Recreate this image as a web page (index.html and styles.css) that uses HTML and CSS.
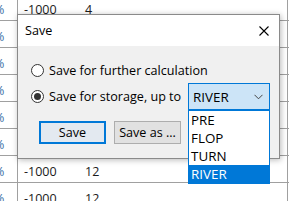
FILE: index.html
```html
<!DOCTYPE html>
<html lang="en">
<head>
  <meta charset="UTF-8" />
  <title>Save</title>
  <link rel="stylesheet" href="styles.css">
</head>
<body>

  <!-- grid behind the dialog -->
  <div class="grid">
    <div class="row"><div class="cell first"><span>%</span></div><div class="cell val">-1000</div><div class="cell num">4</div><div class="cell rest"></div></div>
    <div class="row"><div class="cell first"><span>%</span></div><div class="cell val"></div><div class="cell num"></div><div class="cell rest"></div></div>
    <div class="row"><div class="cell first"><span>%</span></div><div class="cell val"></div><div class="cell num"></div><div class="cell rest"></div></div>
    <div class="row"><div class="cell first"><span>%</span></div><div class="cell val"></div><div class="cell num"></div><div class="cell rest"></div></div>
    <div class="row"><div class="cell first"><span>%</span></div><div class="cell val"></div><div class="cell num"></div><div class="cell rest"></div></div>
    <div class="row"><div class="cell first"><span>%</span></div><div class="cell val"></div><div class="cell num"></div><div class="cell rest"></div></div>
    <div class="row"><div class="cell first"><span>%</span></div><div class="cell val">-1000</div><div class="cell num">12</div><div class="cell rest"></div></div>
    <div class="row"><div class="cell first"><span>%</span></div><div class="cell val">-1000</div><div class="cell num">12</div><div class="cell rest"></div></div>
  </div>

  <!-- Save dialog -->
  <div class="dialog">
    <div class="titlebar">
      <span class="title">Save</span>
      <svg class="close" width="10" height="10" viewBox="0 0 10 10">
        <path d="M0.5 0.5 L9.5 9.5 M9.5 0.5 L0.5 9.5" stroke="#000" stroke-width="1.1" fill="none"/>
      </svg>
    </div>
    <div class="content">
      <div class="option first-opt">
        <span class="radio"></span>
        <span>Save for further calculation</span>
      </div>
      <div class="option">
        <span class="radio checked"></span>
        <span>Save for storage, up to</span>
        <div class="select">
          <span>RIVER</span>
          <svg width="9" height="6" viewBox="0 0 9 6">
            <path d="M0.5 0.8 L4.5 4.8 L8.5 0.8" stroke="#444" stroke-width="1" fill="none"/>
          </svg>
          <ul class="dropdown">
            <li>PRE</li>
            <li>FLOP</li>
            <li>TURN</li>
            <li class="selected">RIVER</li>
          </ul>
        </div>
      </div>
      <div class="buttons">
        <button class="btn default">Save</button>
        <button class="btn">Save as ...</button>
      </div>
    </div>
  </div>

</body>
</html>
```

FILE: styles.css
```css
body {
  margin: 0;
  background: #fff;
  font-family: 'Open Sans', 'Noto Sans', sans-serif;
  font-size: 12px;
  color: #000;
  overflow: hidden;
  width: 289px;
  height: 201px;
  position: relative;
}

/* background table */
.grid {
  margin-top: -6px;
  font-size: 12.5px;
}

.row {
  display: flex;
  height: 26px;
  border-bottom: 1px solid #a0a0a0;
}

.cell {
  padding-top: 8px;
  line-height: 16px;
  color: #1a1a1a;
}

.first {
  width: 17px;
  border-right: 1px solid #a0a0a0;
  overflow: hidden;
}

.first span {
  margin-left: -6px;
  color: #3a6ea5;
}

.val {
  width: 61px;
  padding-left: 6px;
}

.num {
  width: 202px;
}

.rest {
  width: 1px;
  border-left: 1px solid #a0a0a0;
}

/* dialog */
.dialog {
  position: absolute;
  left: 17px;
  top: 14px;
  width: 261px;
  height: 143px;
  border: 1px solid #8a8a8a;
  background: #f0f0f0;
  box-shadow: 1px 1px 6px rgba(0, 0, 0, 0.28);
  font-size: 12.6px;
}

.titlebar {
  height: 31px;
  background: #fff;
  display: flex;
  align-items: center;
  justify-content: space-between;
  padding: 0 10px 0 7px;
}

.close {
  margin-top: 1px;
}

.content {
  padding: 14px 0 0 13px;
}

.option {
  display: flex;
  align-items: center;
  height: 27px;
}

.first-opt {
  height: 20px;
  margin-bottom: 3px;
}

.radio {
  width: 13px;
  height: 13px;
  box-sizing: border-box;
  border: 1px solid #333;
  border-radius: 50%;
  background: #fff;
  margin-right: 5px;
  display: flex;
  align-items: center;
  justify-content: center;
}

.radio.checked::after {
  content: "";
  width: 7px;
  height: 7px;
  border-radius: 50%;
  background: #333;
}

.select {
  position: relative;
  margin-left: auto;
  margin-right: 9px;
  width: 82px;
  height: 27px;
  box-sizing: border-box;
  border: 1px solid #0078d7;
  background: #cce4f7;
  display: flex;
  align-items: center;
  justify-content: space-between;
  padding: 0 6px 0 4px;
  font-size: 13.4px;
}

.dropdown {
  position: absolute;
  left: -1px;
  top: 26px;
  width: 82px;
  box-sizing: border-box;
  margin: 0;
  padding: 0;
  list-style: none;
  background: #fff;
  border: 1px solid #0078d7;
  z-index: 2;
}

.dropdown li {
  height: 18px;
  line-height: 18px;
  padding-left: 2px;
}

.dropdown li.selected {
  background: #0078d7;
  color: #fff;
}

.buttons {
  display: flex;
  gap: 8px;
  padding-left: 8px;
  margin-top: 11px;
}

.btn {
  width: 67px;
  height: 23px;
  font-family: inherit;
  font-size: 12.6px;
  color: #000;
  background: #e1e1e1;
  border: 1px solid #adadad;
  padding: 0;
}

.btn.default {
  background: #e3e9f0;
  border: 2px solid #0078d7;
}
```
